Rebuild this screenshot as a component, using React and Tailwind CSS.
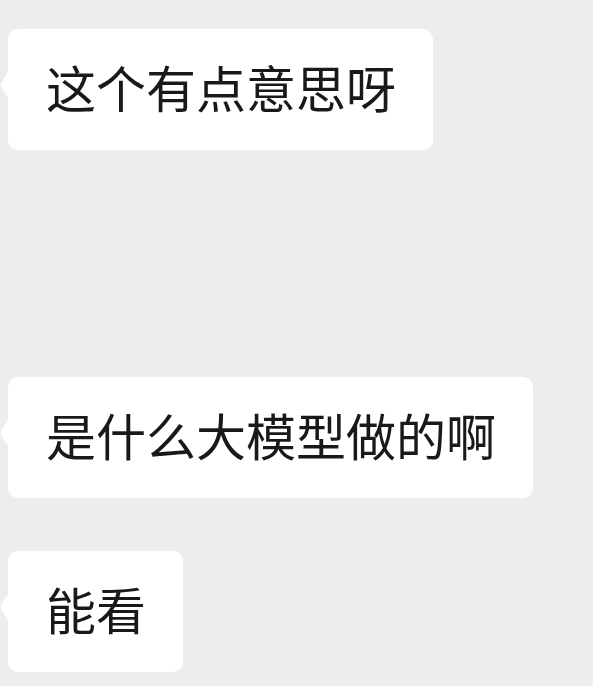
const messages = [
  { id: 1, text: "这个有点意思呀", gap: "mb-[227px]" },
  { id: 2, text: "是什么大模型做的啊", gap: "mb-[53px]" },
  { id: 3, text: "能看", gap: "" },
];

// little pointer on the left edge of each bubble
function Tail() {
  return (
    <svg
      className="absolute -left-[8px] top-[37px]"
      width="9"
      height="38"
      viewBox="0 0 9 38"
      fill="#ffffff"
    >
      <path d="M9 0 C9 4 8 6 6 9 L1.2 17.5 Q0 19 1.2 20.5 L6 29 C8 32 9 34 9 38 Z" />
    </svg>
  );
}

function Bubble({ text, gap }) {
  return (
    <div className={`relative self-start bg-white rounded-[10px] pl-[38px] pr-[37px] pt-[32px] pb-[38px] ${gap}`}>
      <Tail />
      <p className="text-[50px] leading-[51px] text-[#191919] whitespace-nowrap">{text}</p>
    </div>
  );
}

export default function App() {
  return (
    <div
      className="w-full h-[686px] bg-[#ededed] flex flex-col pt-[29px] pl-[8px] overflow-hidden"
      style={{ fontFamily: '"Noto Sans CJK SC", "Noto Sans", sans-serif' }}
    >
      {messages.map((m) => (
        <Bubble key={m.id} text={m.text} gap={m.gap} />
      ))}
    </div>
  );
}
